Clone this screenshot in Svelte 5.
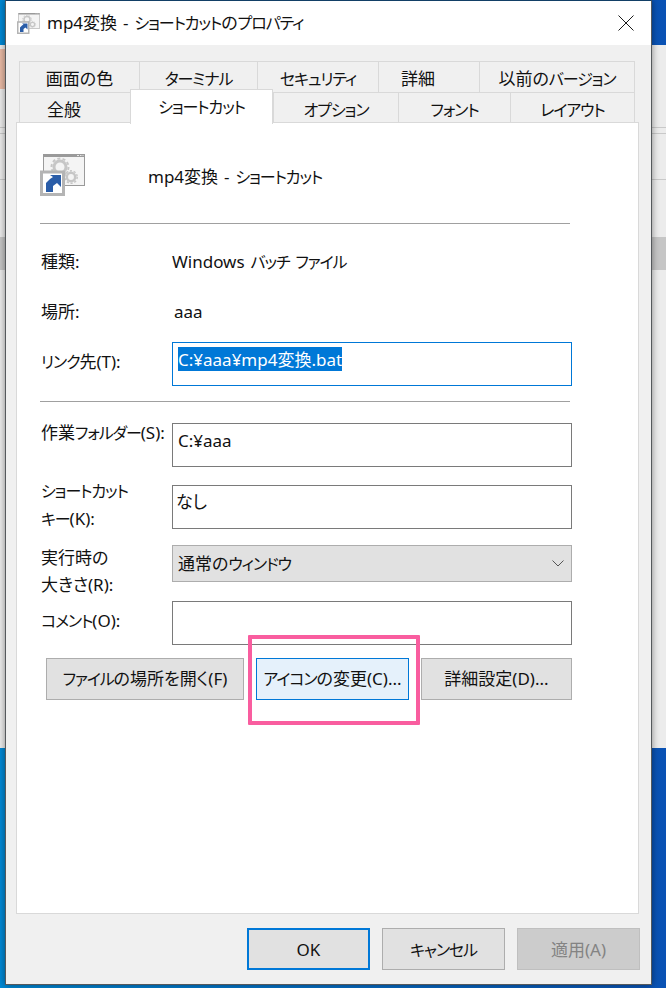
<script lang="ts">
  const topTabs = ["画面の色", "ターミナル", "セキュリティ", "詳細", "以前のバージョン"];
  const bottomTabs = ["全般", "ショートカット", "オプション", "フォント", "レイアウト"];

  // katakana sits narrower than the kanji in the UI font
  function parts(text: string) {
    return text.split(/([ァ-ヶー]+)/).filter(Boolean).map((value) => ({
      value,
      kana: /^[ァ-ヶー]/.test(value),
    }));
  }
</script>

{#snippet txt(text: string)}{#each parts(text) as part}<span class:kana={part.kana}>{part.value}</span>{/each}{/snippet}

{#snippet fileIcon(width: number, height: number)}
  <svg class="file-icon" {width} {height} viewBox="0 0 46 42">
    <rect x="3.5" y="0.5" width="41" height="31" fill="#f4f4f4" stroke="#9a9a9a" />
    <rect x="3" y="0" width="42" height="3" fill="#9a9a9a" />
    <path d="M37 1.5h2M40 1.5h1.5M42.500 1.500h1" stroke="#e8e8e8" />
    <circle cx="20" cy="13" r="6" fill="none" stroke="#c6c6c6" stroke-width="3" />
    <circle cx="20" cy="13" r="8.500" fill="none" stroke="#c6c6c6" stroke-width="2" stroke-dasharray="3 2.300" />
    <circle cx="31" cy="23" r="4.200" fill="none" stroke="#c6c6c6" stroke-width="2.500" />
    <circle cx="31" cy="23" r="6.200" fill="none" stroke="#c6c6c6" stroke-width="1.500" stroke-dasharray="2.200 1.700" />
    <rect x="1.500" y="18" width="22" height="22.500" fill="#fff" stroke="#b4b4b4" stroke-width="3" />
    <path d="M10 21h11v12l-4-4-4 3v6H6v-9l4-4 3-2z" fill="#2a5da8" />
  </svg>
{/snippet}

<div class="desktop">
  <div class="strip left">
    <div class="behind"></div>
  </div>

  <div class="window">
    <header class="titlebar">
      {@render fileIcon(23, 21)}
      <span class="title">{@render txt("mp4変換 - ショートカットのプロパティ")}</span>
      <svg class="close" width="16" height="16" viewBox="0 0 16 16">
        <path d="M0.500 0.500l15 15M15.500 0.500l-15 15" stroke="#1a1a1a" fill="none" />
      </svg>
    </header>

    <div class="body">
      <div class="tabs">
        <div class="tab-row top">
          {#each topTabs as tab, i}
            <div class="tab" class:shifted={i === 3}>{@render txt(tab)}</div>
          {/each}
        </div>
        <div class="tab-row bottom">
          {#each bottomTabs as tab, i}
            <div class="tab" class:active={i === 1} class:shifted={i === 0}>{@render txt(tab)}</div>
          {/each}
        </div>
      </div>

      <section class="panel">
        <div class="heading">
          {@render fileIcon(46, 42)}
          <span class="heading-name">{@render txt("mp4変換 - ショートカット")}</span>
        </div>
        <hr class="first" />

        <div class="row info kind">
          <div class="label">種類:</div>
          <div class="value">Windows {@render txt("バッチ ファイル")}</div>
        </div>
        <div class="row info place">
          <div class="label">場所:</div>
          <div class="value aaa">aaa</div>
        </div>

        <div class="row field link">
          <div class="label">{@render txt("リンク先(T):")}</div>
          <div class="box focused"><span class="selected">C:¥aaa¥mp4変換.bat</span></div>
        </div>
        <hr class="second" />

        <div class="row field folder">
          <div class="label">{@render txt("作業フォルダー(S):")}</div>
          <div class="box">C:¥aaa</div>
        </div>
        <div class="row field hotkey">
          <div class="label">{@render txt("ショートカット")}<br />{@render txt("キー(K):")}</div>
          <div class="box none">なし</div>
        </div>
        <div class="row field size">
          <div class="label">実行時の<br />大きさ(R):</div>
          <div class="box combo">
            <span>{@render txt("通常のウィンドウ")}</span>
            <svg width="12" height="7" viewBox="0 0 12 7">
              <path d="M0.500 0.500L6 6l5.500-5.500" fill="none" stroke="#555" />
            </svg>
          </div>
        </div>
        <div class="row field comment">
          <div class="label">{@render txt("コメント(O):")}</div>
          <div class="box"></div>
        </div>

        <div class="actions">
          <button class="open">{@render txt("ファイルの場所を開く(F)")}</button>
          <button class="change">{@render txt("アイコンの変更(C)...")}</button>
          <button class="advanced">詳細設定(D)...</button>
        </div>

        <div class="callout"></div>
      </section>

      <footer class="footer">
        <button class="ok">OK</button>
        <button>{@render txt("キャンセル")}</button>
        <button class="disabled">適用(A)</button>
      </footer>
    </div>
  </div>

  <div class="strip right">
    <div class="behind"></div>
  </div>
</div>

<style>
  :global(body) {
    margin: 0;
    font-family: "Noto Sans", "Noto Sans CJK JP", sans-serif;
  }

  .desktop {
    display: flex;
    width: 666px;
    height: 988px;
    overflow: hidden;
    background: linear-gradient(90deg, #0088d4, #0a52b4);
    font-size: 17px;
    line-height: 24px;
    word-spacing: 1.5px;
    color: #111;
    font-feature-settings: "palt";
  }

  .kana {
    font-size: 16px;
    letter-spacing: -1.1px;
  }

  .strip {
    flex: none;
    padding-top: 45px;
  }

  .left {
    width: 5px;
  }

  .right {
    width: 14px;
  }

  .behind {
    height: 703px;
    background: linear-gradient(
      180deg,
      #ececec 0 82px,
      #c9c9c9 82px 83px,
      #ececec 83px 88px,
      #c9c9c9 88px 89px,
      #ececec 89px 134px,
      #c9c9c9 134px 135px,
      #ececec 135px 192px,
      #c6c6c6 192px 225px,
      #ececec 225px
    );
  }

  .left .behind {
    background: linear-gradient(
      180deg,
      #ececec 0 4px,
      #e8b9a4 4px 44px,
      #ececec 44px 82px,
      #c9c9c9 82px 83px,
      #ececec 83px 88px,
      #c9c9c9 88px 89px,
      #ececec 89px 134px,
      #c9c9c9 134px 135px,
      #ececec 135px 192px,
      #c6c6c6 192px 225px,
      #ececec 225px
    );
  }

  .window {
    flex: none;
    box-sizing: border-box;
    width: 647px;
    height: 985px;
    border: 1px solid #55595c;
    border-top-color: #123f66;
    background: #f0f0f0;
    box-shadow: 0 0 7px rgba(0, 0, 0, 0.45);
    position: relative;
  }

  .titlebar {
    display: flex;
    align-items: center;
    height: 44px;
    padding: 0 17px 0 11px;
    background: #fff;
  }

  .title {
    flex: 1;
    margin-left: 7px;
  }

  .file-icon {
    flex: none;
    display: block;
  }

  .body {
    padding: 16px 11px 0 10px;
  }

  .tabs {
    margin: 0 0 -1px 3px;
    position: relative;
    z-index: 1;
  }

  .tab-row {
    display: grid;
    align-items: start;
    height: 31px;
  }

  .tab-row.top {
    grid-template-columns: 120px 118px 121px 101px 156px;
  }

  .tab-row.bottom {
    grid-template-columns: 111px 143px 125px 112px 125px;
  }

  .tab {
    box-sizing: border-box;
    height: 32px;
    border: 1px solid #d9d9d9;
    border-right: 0;
    text-align: center;
    line-height: 33px;
  }

  .tab:last-child {
    border-right: 1px solid #d9d9d9;
  }

  .tab.shifted {
    padding-right: 22px;
  }

  .bottom .tab {
    border-top: 0;
    height: 31px;
    line-height: 35px;
  }

  .bottom .tab.active {
    height: 35px;
    margin-top: -3px;
    position: relative;
    border: 1px solid #d9d9d9;
    border-bottom: 0;
    background: #fff;
    line-height: 33px;
  }

  .panel {
    box-sizing: border-box;
    position: relative;
    width: 623px;
    height: 792px;
    padding: 31px 0 0 23px;
    border: 1px solid #d9d9d9;
    background: #fff;
  }

  .heading {
    display: flex;
    align-items: center;
    height: 41px;
  }

  .heading-name {
    margin-left: 62px;
    margin-top: 5px;
  }

  hr {
    width: 530px;
    height: 1px;
    margin: 0;
    border: 0;
    background: #a0a0a0;
  }

  hr.first {
    margin-top: 28px;
  }

  hr.second {
    margin-top: 15px;
  }

  .row {
    display: grid;
    grid-template-columns: 132px 400px;
  }

  .label {
    margin-left: 1px;
    line-height: 27px;
  }

  .info {
    height: 24px;
  }

  .info .label,
  .value {
    line-height: 24px;
  }

  .kind {
    margin-top: 26px;
  }

  .place {
    margin-top: 26px;
  }

  .aaa {
    margin-left: 2px;
  }

  .field {
    height: 44px;
  }

  .box {
    box-sizing: border-box;
    height: 44px;
    padding: 4px 5px;
    border: 1px solid #7a7a7a;
    background: #fff;
    line-height: 26px;
  }

  .box.focused {
    border-color: #0078d7;
  }

  .box.none {
    padding-left: 3px;
    line-height: 24px;
  }

  .selected {
    display: inline-block;
    height: 24px;
    vertical-align: top;
    background: #0078d7;
    color: #fff;
  }

  .link {
    margin-top: 18px;
  }

  .link .label {
    margin-top: 6px;
  }

  .folder {
    margin-top: 21px;
  }

  .folder .label {
    margin-top: -4px;
  }

  .hotkey {
    margin-top: 18px;
  }

  .hotkey .label {
    margin-top: -8px;
  }

  .size {
    height: 37px;
    margin-top: 16px;
  }

  .size .label {
    margin-top: -1px;
  }

  .combo {
    display: flex;
    align-items: center;
    justify-content: space-between;
    height: 37px;
    padding: 0 7px 0 5px;
    border-color: #adadad;
    background: #e1e1e1;
  }

  .comment {
    margin-top: 19px;
  }

  .comment .label {
    margin-top: 6px;
  }

  .actions {
    display: flex;
    gap: 12px;
    margin: 13px 0 0 6px;
  }

  button {
    box-sizing: border-box;
    height: 42px;
    padding: 0;
    border: 1px solid #adadad;
    background: #e1e1e1;
    color: #111;
    font: inherit;
    font-feature-settings: inherit;
  }

  .open {
    width: 198px;
  }

  .change {
    width: 153px;
    border-color: #0078d7;
    background: #e5f1fb;
  }

  .advanced {
    width: 151px;
  }

  .callout {
    position: absolute;
    left: 231px;
    top: 512px;
    box-sizing: border-box;
    width: 172px;
    height: 90px;
    border: 4px solid #f95d9f;
    border-radius: 1px;
  }

  .footer {
    display: flex;
    justify-content: flex-end;
    gap: 12px;
    margin-top: 14px;
  }

  .footer button {
    width: 123px;
    padding-top: 2px;
  }

  .ok {
    border: 2px solid #0078d7;
  }

  .footer .disabled {
    border-color: #bfbfbf;
    background: #ccc;
    color: #838383;
  }
</style>
